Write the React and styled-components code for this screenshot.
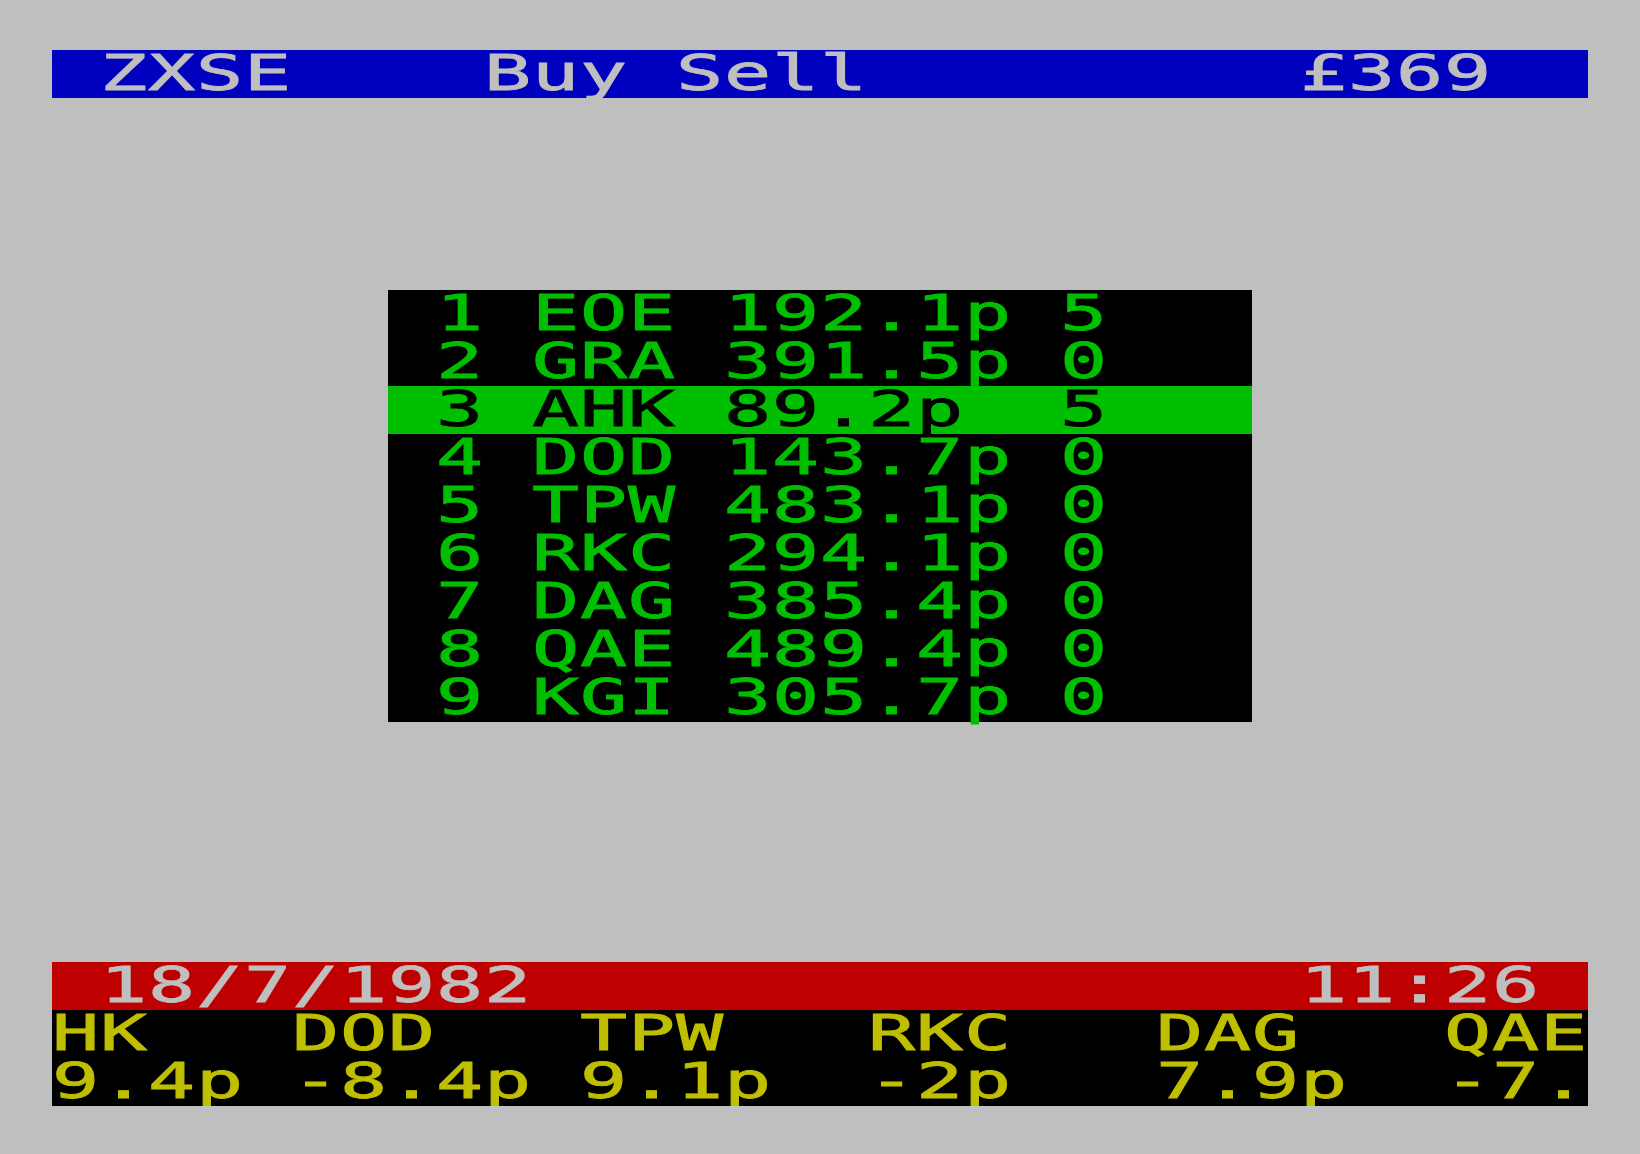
import React from 'react';
import styled, { createGlobalStyle } from 'styled-components';

// one spectrum pixel = 6px, one character cell = 48px
const GREY = '#bfbfbf';
const BLUE = '#0000bf';
const RED = '#bf0000';
const GREEN = '#00bf00';
const YELLOW = '#bfbf00';

const stocks = [
    { code: 'EOE', price: '192.1p', qty: 5 },
    { code: 'GRA', price: '391.5p', qty: 0 },
    { code: 'AHK', price: '89.2p', qty: 5 },
    { code: 'DOD', price: '143.7p', qty: 0 },
    { code: 'TPW', price: '483.1p', qty: 0 },
    { code: 'RKC', price: '294.1p', qty: 0 },
    { code: 'DAG', price: '385.4p', qty: 0 },
    { code: 'QAE', price: '489.4p', qty: 0 },
    { code: 'KGI', price: '305.7p', qty: 0 },
];

const selected = 2;

const App = () => {
    return (
        <>
            <GlobalStyle />
            <Screen>
                <Bar $bg={BLUE} $fg={GREY}>
                    <Line>{' ZXSE    Buy Sell         £369'}</Line>
                </Bar>

                <Panel>
                    {stocks.map((s, i) => (
                        <StockRow key={s.code} $active={i === selected}>
                            <Line>{` ${i + 1} ${s.code} ${s.price.padEnd(6)} ${s.qty}`}</Line>
                        </StockRow>
                    ))}
                </Panel>

                <Bar $bg={RED} $fg={GREY} $top={240}>
                    <Line>{' 18/7/1982                11:26'}</Line>
                </Bar>
                <Ticker>
                    <Line>{'HK   DOD   TPW   RKC   DAG   QAE'}</Line>
                    <Line>{'9.4p -8.4p 9.1p  -2p   7.9p  -7.'}</Line>
                </Ticker>
            </Screen>
        </>
    )
}

export default App

const GlobalStyle = createGlobalStyle`
html, body {
    margin:0;
    padding:0;
    background:${GREY};
    min-height:100%;
}
body{
    overflow:hidden;
}
`

const Screen = styled.div`
width:1536px;
padding:50px 0 0 52px;
display:flex;
flex-direction:column;
`

const Line = styled.div`
display:block;
width:max-content;
height:48px;
white-space:pre;
font-family:"DejaVu Sans Mono", "Liberation Mono", monospace;
font-size:49px;
line-height:48px;
letter-spacing:0.5px;
-webkit-text-stroke:0.8px currentColor;
transform:scaleX(1.6);
transform-origin:0 0;
`

const Bar = styled.div`
height:48px;
margin-top:${p => p.$top || 0}px;
background-color:${p => p.$bg};
color:${p => p.$fg};
`

const Panel = styled.div`
width:864px;
margin:192px 0 0 336px;
background-color:black;
display:flex;
flex-direction:column;
`

const StockRow = styled.div`
height:48px;
background-color:${p => p.$active ? GREEN : 'black'};
color:${p => p.$active ? 'black' : GREEN};
`

const Ticker = styled.div`
background-color:black;
color:${YELLOW};
display:flex;
flex-direction:column;
`
